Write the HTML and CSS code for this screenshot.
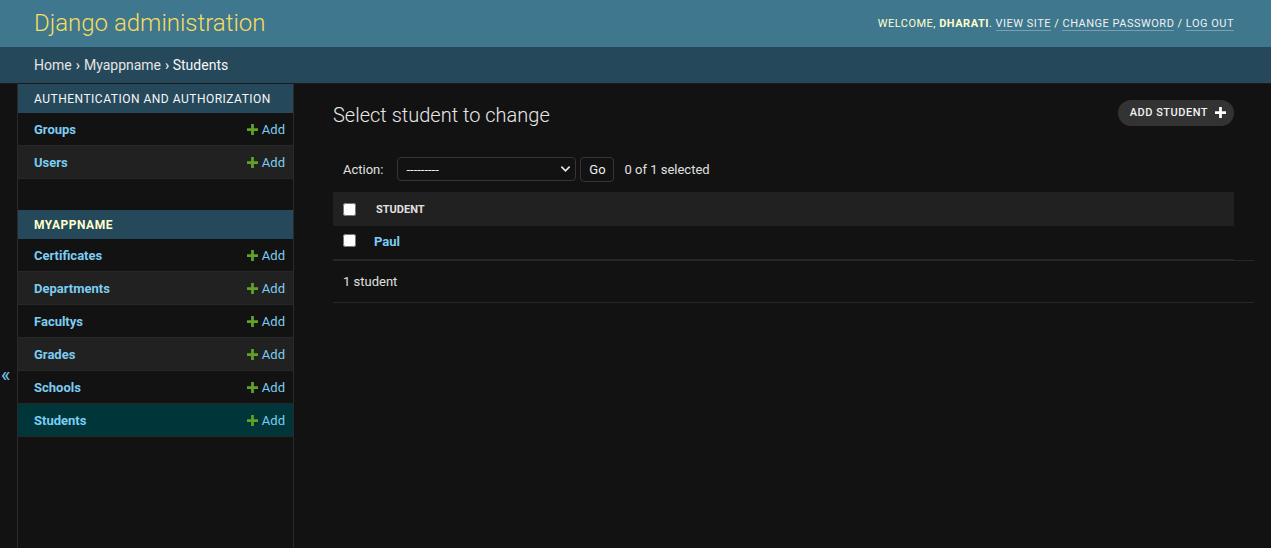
FILE: index.html
```html
<!DOCTYPE html>
<html lang="en">
<head>
<meta charset="utf-8">
<title>Select student to change | Django site admin</title>
<link rel="stylesheet" href="styles.css">
</head>
<body>
<div class="container">
  <header class="header">
    <div class="branding">Django administration</div>
    <div class="user-tools">
      Welcome, <strong>Dharati</strong>. <a href="#">View site</a> / <a href="#">Change password</a> / <a href="#">Log out</a>
    </div>
  </header>
  <nav class="breadcrumbs">
    <a href="#">Home</a> › <a href="#">Myappname</a> › Students
  </nav>
  <div class="main">
    <button class="toggle-nav" type="button">«</button>
    <nav class="sidebar">
      <div class="module">
        <div class="caption">Authentication and Authorization</div>
        <div class="row"><a class="model" href="#">Groups</a><a class="addlink" href="#"><svg class="plus" viewBox="0 0 12 12"><path d="M4.5 0h3v4.5H12v3H7.5V12h-3V7.5H0v-3h4.5z"/></svg>Add</a></div>
        <div class="row alt"><a class="model" href="#">Users</a><a class="addlink" href="#"><svg class="plus" viewBox="0 0 12 12"><path d="M4.5 0h3v4.5H12v3H7.5V12h-3V7.5H0v-3h4.5z"/></svg>Add</a></div>
      </div>
      <div class="module">
        <div class="caption current">Myappname</div>
        <div class="row"><a class="model" href="#">Certificates</a><a class="addlink" href="#"><svg class="plus" viewBox="0 0 12 12"><path d="M4.5 0h3v4.5H12v3H7.5V12h-3V7.5H0v-3h4.5z"/></svg>Add</a></div>
        <div class="row alt"><a class="model" href="#">Departments</a><a class="addlink" href="#"><svg class="plus" viewBox="0 0 12 12"><path d="M4.5 0h3v4.5H12v3H7.5V12h-3V7.5H0v-3h4.5z"/></svg>Add</a></div>
        <div class="row"><a class="model" href="#">Facultys</a><a class="addlink" href="#"><svg class="plus" viewBox="0 0 12 12"><path d="M4.5 0h3v4.5H12v3H7.5V12h-3V7.5H0v-3h4.5z"/></svg>Add</a></div>
        <div class="row alt"><a class="model" href="#">Grades</a><a class="addlink" href="#"><svg class="plus" viewBox="0 0 12 12"><path d="M4.5 0h3v4.5H12v3H7.5V12h-3V7.5H0v-3h4.5z"/></svg>Add</a></div>
        <div class="row"><a class="model" href="#">Schools</a><a class="addlink" href="#"><svg class="plus" viewBox="0 0 12 12"><path d="M4.5 0h3v4.5H12v3H7.5V12h-3V7.5H0v-3h4.5z"/></svg>Add</a></div>
        <div class="row selected"><a class="model" href="#">Students</a><a class="addlink" href="#"><svg class="plus" viewBox="0 0 12 12"><path d="M4.5 0h3v4.5H12v3H7.5V12h-3V7.5H0v-3h4.5z"/></svg>Add</a></div>
      </div>
    </nav>
    <div class="content">
      <div class="title-row">
        <h1>Select student to change</h1>
        <a class="addbtn" href="#">Add student <svg class="plus-w" viewBox="0 0 12 12"><path d="M4.5 0h3v4.5H12v3H7.5V12h-3V7.5H0v-3h4.5z"/></svg></a>
      </div>
      <div class="actions">
        <label>Action:</label>
        <span class="select-wrap">
          <select class="action-select"><option>---------</option><option>Delete selected students</option></select>
          <svg class="chev" viewBox="0 0 12 8"><path d="M1.5 1.5l4.5 4.5 4.5-4.5" fill="none" stroke="#e8e8e8" stroke-width="1.8"/></svg>
        </span>
        <button class="go" type="button">Go</button>
        <span class="counter">0 of 1 selected</span>
      </div>
      <table class="results">
        <thead>
          <tr><th class="cb"><input type="checkbox"></th><th class="col">Student</th></tr>
        </thead>
        <tbody>
          <tr><td class="cb"><input type="checkbox"></td><th class="name"><a href="#">Paul</a></th></tr>
        </tbody>
      </table>
      <p class="paginator">1 student</p>
    </div>
  </div>
</div>
</body>
</html>
```
FILE: styles.css
```css
* { box-sizing: border-box; }
html, body { margin: 0; padding: 0; }
body {
  background: #121212;
  color: #eeeeee;
  font-family: Roboto, "Noto Sans", "Liberation Sans", sans-serif;
  font-size: 14px;
}
a { text-decoration: none; color: #7ccdf2; }

.header {
  height: 47px;
  background: #3f778f;
  display: flex;
  align-items: center;
  justify-content: space-between;
  padding: 0 37px 0 34px;
}
.branding {
  color: #f5dd5d;
  font-size: 24px;
  font-weight: 300;
  margin-top: -2px;
}
.user-tools {
  color: #ffffcc;
  font-size: 11px;
  text-transform: uppercase;
  letter-spacing: 0.5px;
}
.user-tools strong { font-weight: 700; }
.user-tools a {
  color: #f0f0f0;
  border-bottom: 1px solid rgba(255,255,255,0.3);
}

.breadcrumbs {
  height: 37px;
  background: #25495b;
  color: #f7f7f7;
  padding: 0 34px 1px;
  display: flex;
  align-items: center;
  gap: 4px;
  font-size: 14px;
  border-bottom: 1px solid #1a1a1a;
}
.breadcrumbs a { color: #e4e4e4; }

.main {
  display: flex;
  min-height: calc(100vh - 84px);
}
.toggle-nav {
  width: 18px;
  flex: none;
  background: #121212;
  border: 0;
  border-right: 1px solid #2a2a2a;
  color: #7ccdf2;
  font-size: 20px;
  padding: 281px 0 0 1px;
  text-align: left;
  display: flex;
  align-items: flex-start;
  font-family: Roboto, "Liberation Sans", sans-serif;
  line-height: 20px;
}
.sidebar {
  width: 276px;
  flex: none;
  border-right: 1px solid #2a2a2a;
}
.module { margin-bottom: 31px; }
.caption {
  background: #25495b;
  color: #f7f7f7;
  font-size: 12px;
  letter-spacing: 0.5px;
  text-transform: uppercase;
  padding: 0 16px;
  height: 29px;
  display: flex;
  align-items: center;
}
.caption.current { color: #ffffcc; font-weight: 700; }
.row {
  height: 33px;
  display: flex;
  align-items: center;
  justify-content: space-between;
  padding: 0 8px 0 16px;
  border-bottom: 1px solid #272727;
  font-size: 13px;
}
.row.alt { background: #212121; }
.row.selected { background: #00363a; }
.model { font-weight: 700; }
.addlink { display: flex; align-items: center; gap: 4px; }
.plus { width: 11px; height: 11px; fill: #5fa225; }

.content {
  flex: 1;
  padding: 16px 17px 0 39px;
}
.title-row {
  display: flex;
  justify-content: space-between;
  align-items: flex-end;
  margin-right: 20px;
  margin-bottom: 22px;
}
h1 {
  margin: 0 0 -1px;
  font-size: 20px;
  font-weight: 300;
  line-height: 24px;
  color: #e8e8e8;
}
.addbtn {
  height: 26px;
  display: flex;
  align-items: center;
  gap: 7px;
  padding: 0 8px 1px 12px;
  background: #333333;
  border-radius: 13px;
  color: #f2f2f2;
  font-size: 11px;
  font-weight: 500;
  text-transform: uppercase;
  letter-spacing: 0.5px;
}
.plus-w { width: 11px; height: 11px; fill: #ffffff; }

.actions {
  height: 44px;
  display: flex;
  align-items: center;
  padding: 0 10px 2px;
  font-size: 13px;
  color: #e0e0e0;
}
.actions label { margin-right: 14px; }
.select-wrap { position: relative; display: inline-flex; }
.action-select {
  appearance: none;
  -webkit-appearance: none;
  width: 179px;
  height: 24px;
  background: #121212;
  color: #eeeeee;
  border: 1px solid #353535;
  border-radius: 4px;
  padding: 0 8px;
  font-family: inherit;
  font-size: 13px;
}
.chev {
  position: absolute;
  right: 5px;
  top: 8px;
  width: 11px;
  height: 8px;
  pointer-events: none;
}
.go {
  margin-left: 4px;
  width: 34px;
  height: 25px;
  background: #121212;
  color: #eeeeee;
  border: 1px solid #353535;
  border-radius: 4px;
  font-family: inherit;
  font-size: 13px;
  padding: 1px 0 0;
}
.counter { margin-left: 10px; }

.results {
  width: calc(100% - 20px);
  border-collapse: collapse;
}
.results thead th {
  background: #212121;
  height: 34px;
  text-align: left;
  font-size: 11px;
  font-weight: 700;
  text-transform: uppercase;
  color: #e0e0e0;
  padding: 0 10px;
}
.results thead th.cb { width: 33px; }
.results td, .results tbody th {
  height: 33px;
  border-bottom: 1px solid #272727;
  text-align: left;
  vertical-align: top;
  padding: 8px 8px 0;
  font-size: 13px;
  line-height: 16px;
}
.results td.cb { padding: 8px 10px 0; }
.results tbody th.name { padding-top: 8px; }
.results input[type=checkbox] {
  margin: 0;
  width: 13px;
  height: 13px;
  vertical-align: middle;
}
.results td.cb input { vertical-align: top; }
.results tbody th.name a { font-weight: 700; }

.paginator {
  margin: 0;
  height: 43px;
  display: flex;
  align-items: center;
  padding: 0 10px;
  font-size: 13px;
  color: #e0e0e0;
  border-top: 1px solid #272727;
  border-bottom: 1px solid #272727;
}
```
